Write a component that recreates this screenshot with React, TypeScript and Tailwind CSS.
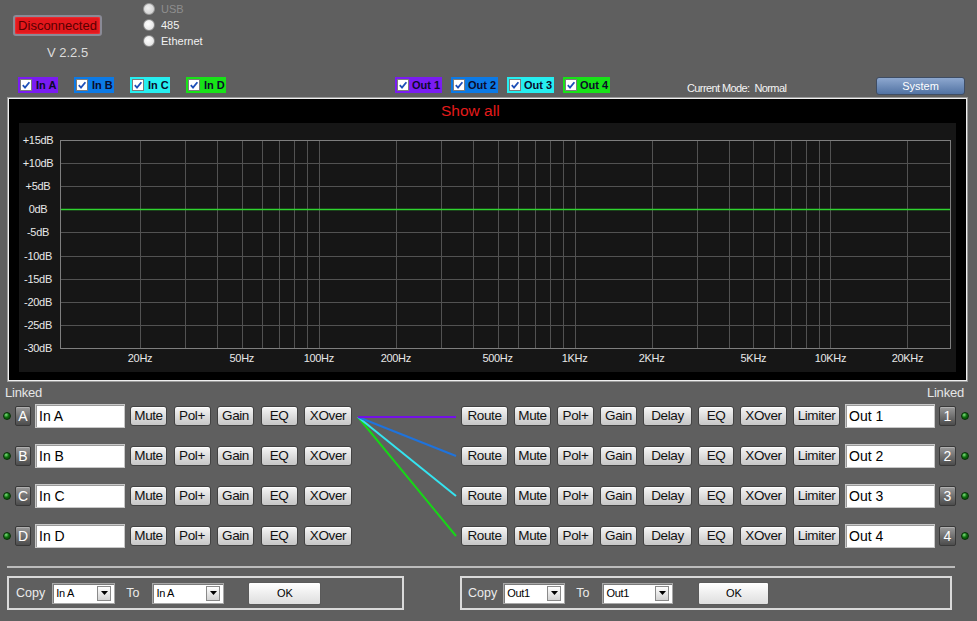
import React from "react";

const FONT = "font-['Liberation_Sans',Arial,sans-serif]";

function Check() {
  return (
    <div className="w-[12px] h-[12px] bg-white border border-[#7c7c7c] flex items-center justify-center shrink-0">
      <svg width="10" height="10" viewBox="0 0 10 10">
        <path d="M1.8 5.2 L4 7.6 L8.4 2.2" fill="none" stroke="#1d4fb8" strokeWidth="1.8" />
      </svg>
    </div>
  );
}

function Chip({ label, bg, w, gap }: { label: string; bg: string; w: string; gap: string }) {
  return (
    <div className={`${w} h-[16px] flex items-center pl-[2px] ${bg}`}>
      <Check />
      <span className={`${gap} text-[11px] font-bold leading-none text-[#0b0b2a]`}>{label}</span>
    </div>
  );
}

function Radio({ label, disabled }: { label: string; disabled?: boolean }) {
  return (
    <div className="h-[16px] flex items-center">
      <div
        className={`w-[12px] h-[12px] rounded-full border ${
          disabled
            ? "border-[#9a9a9a] bg-[radial-gradient(circle_at_40%_40%,#f0f0f0,#c8c8c8)]"
            : "border-[#8a8a8a] bg-[radial-gradient(circle_at_40%_40%,#ffffff,#dcdcdc)]"
        }`}
      />
      <span className={`ml-[6px] text-[11px] leading-none ${disabled ? "text-[#8e8e8e]" : "text-[#f2f2f2]"}`}>{label}</span>
    </div>
  );
}

function Btn({ label, w }: { label: string; w: string }) {
  return (
    <div
      className={`${w} h-[20px] shrink-0 rounded-[3px] border border-[#424242] bg-linear-to-b from-[#f6f6f6] to-[#c6c6c6] shadow-[inset_0_1px_0_#ffffff] flex items-center justify-center text-[13.5px] tracking-[-0.4px] text-[#111] leading-none`}
    >
      {label}
    </div>
  );
}

function DarkBtn({ label, w }: { label: string; w: string }) {
  return (
    <div
      className={`${w} h-[20px] shrink-0 rounded-[2px] border border-[#383838] bg-linear-to-b from-[#9a9a9a] to-[#4c4c4c] shadow-[inset_0_1px_0_#b0b0b0] flex items-center justify-center text-[14px] text-white leading-none`}
    >
      {label}
    </div>
  );
}

function Led({ extra = "" }: { extra?: string }) {
  return (
    <div className={`w-[8px] h-[8px] shrink-0 rounded-full border border-[#063006] bg-[radial-gradient(circle_at_35%_30%,#7ee07e_0%,#107010_45%,#054005_100%)] ${extra}`} />
  );
}

function NameBox({ label, extra = "" }: { label: string; extra?: string }) {
  return (
    <div
      className={`w-[90px] h-[24px] shrink-0 bg-white border border-[#c8c8c8] shadow-[inset_1px_1px_0_#9a9a9a] pl-[3px] pt-[2px] text-[14px] leading-[18px] text-black ${extra}`}
    >
      {label}
    </div>
  );
}

function Select({ value, w }: { value: string; w: string }) {
  return (
    <div className={`${w} h-[21px] shrink-0 bg-white border border-[#a8a8a8] shadow-[inset_1px_1px_0_#7a7a7a] flex items-center pl-[3px] pr-[3px]`}>
      <span className="text-[11px] tracking-[-0.3px] leading-none text-black">{value}</span>
      <div className="ml-auto w-[14px] h-[15px] border border-[#8a8a8a] bg-linear-to-b from-[#ffffff] to-[#d2d2d2] flex items-center justify-center">
        <svg width="7" height="4" viewBox="0 0 7 4">
          <path d="M0 0 L7 0 L3.5 4 Z" fill="#000" />
        </svg>
      </div>
    </div>
  );
}

function OkBtn({ w }: { w: string }) {
  return (
    <div className={`${w} h-[23px] shrink-0 rounded-[2px] border border-[#5a5a5a] bg-linear-to-b from-[#ffffff] to-[#dedede] flex items-center justify-center text-[11px] leading-none text-black`}>
      OK
    </div>
  );
}

const fx = (f: number) => 121 + 255.8 * Math.log10(f / 20);
const gridFreqs = [
  20, 30, 40, 50, 60, 70, 80, 90, 100, 200, 300, 400, 500, 600, 700, 800, 900, 1000, 2000, 3000, 4000, 5000, 6000,
  7000, 8000, 9000, 10000, 20000,
];
const xLabels: [number, string][] = [
  [20, "20Hz"],
  [50, "50Hz"],
  [100, "100Hz"],
  [200, "200Hz"],
  [500, "500Hz"],
  [1000, "1KHz"],
  [2000, "2KHz"],
  [5000, "5KHz"],
  [10000, "10KHz"],
  [20000, "20KHz"],
];
const yLabels = ["+15dB", "+10dB", "+5dB", "0dB", "-5dB", "-10dB", "-15dB", "-20dB", "-25dB", "-30dB"];
const gy = (i: number) => 17 + i * 23.11;

function Chart() {
  return (
    <svg width="937" height="249" viewBox="0 0 937 249" className="block">
      <g shapeRendering="crispEdges">
        {gridFreqs.map((f) => (
          <line key={f} x1={Math.round(fx(f)) + 0.5} y1={17} x2={Math.round(fx(f)) + 0.5} y2={225} stroke="#525252" strokeWidth="1" />
        ))}
        {yLabels.map((_, i) =>
          i > 0 && i < 9 && i !== 3 ? (
            <line key={i} x1={41} y1={Math.round(gy(i)) + 0.5} x2={931} y2={Math.round(gy(i)) + 0.5} stroke="#525252" strokeWidth="1" />
          ) : null
        )}
        <rect x="41.5" y="17.5" width="890" height="208" fill="none" stroke="#7e7e7e" strokeWidth="1" />
      </g>
      <line x1={42} y1={Math.round(gy(3)) + 0.5} x2={931} y2={Math.round(gy(3)) + 0.5} stroke="#2fd42f" strokeWidth="1.4" />
      <g fontFamily="'Liberation Sans', Arial, sans-serif" fontSize="11" fill="#e8e8e8" letterSpacing="-0.3">
        {yLabels.map((l, i) => (
          <text key={l} x={19} y={gy(i)} textAnchor="middle" dominantBaseline="central">
            {l}
          </text>
        ))}
        {xLabels.map(([f, l]) => (
          <text key={l} x={fx(f)} y={235} textAnchor="middle" dominantBaseline="central">
            {l}
          </text>
        ))}
      </g>
    </svg>
  );
}

const inRows = ["A", "B", "C", "D"];

export default function App() {
  return (
    <div className={`w-[977px] h-[621px] bg-[#5f5f5f] overflow-hidden ${FONT}`}>
      {/* header */}
      <div className="flex h-[77px]">
        <div className="w-[143px] pl-[13px] pt-[15px]">
          <div className="w-[89px] h-[21px] rounded-[3px] border-2 border-[#8a8a96] bg-[#e3171c] shadow-[inset_0_0_2px_#ff6060] flex items-center justify-center text-[13px] leading-none text-[#5a0000]">
            Disconnected
          </div>
          <div className="mt-[9px] pl-[34px] text-[13px] leading-[16px] text-[#dcdcdc]">V 2.2.5</div>
        </div>
        <div className="pt-[1px] flex flex-col">
          <Radio label="USB" disabled />
          <Radio label="485" />
          <Radio label="Ethernet" />
        </div>
      </div>

      {/* channel selection row */}
      <div className="flex h-[20px] items-start">
        <div className="flex gap-[16px] pl-[18px]">
          <Chip label="In A" bg="bg-[#7a1cf2]" w="w-[40px]" gap="ml-[4px]" />
          <Chip label="In B" bg="bg-[#0c7ae6]" w="w-[40px]" gap="ml-[4px]" />
          <Chip label="In C" bg="bg-[#26eef0]" w="w-[40px]" gap="ml-[4px]" />
          <Chip label="In D" bg="bg-[#18e218]" w="w-[40px]" gap="ml-[4px]" />
        </div>
        <div className="flex gap-[9px] ml-[169px]">
          <Chip label="Out 1" bg="bg-[#7a1cf2]" w="w-[47px]" gap="ml-[3px]" />
          <Chip label="Out 2" bg="bg-[#0c7ae6]" w="w-[47px]" gap="ml-[3px]" />
          <Chip label="Out 3" bg="bg-[#26eef0]" w="w-[47px]" gap="ml-[3px]" />
          <Chip label="Out 4" bg="bg-[#18e218]" w="w-[47px]" gap="ml-[3px]" />
        </div>
        <div className="ml-[77px] mt-[4px] text-[11px] leading-[14px] tracking-[-0.6px] text-[#f4f4f4] whitespace-pre">
          Current Mode:  Normal
        </div>
        <div className="ml-auto mr-[12px] w-[89px] h-[18px] rounded-[3px] border border-[#3f4d63] bg-linear-to-b from-[#8ea8cf] to-[#5273a3] flex items-center justify-center text-[11px] leading-none text-white">
          System
        </div>
      </div>

      {/* graph frame */}
      <div className="ml-[7px] w-[961px] h-[285px] border border-[#9c9c9c]">
        <div className="h-full border border-[#efefef] bg-black flex flex-col">
          <div className="h-[24px] pl-[432px] flex items-center text-[15.5px] leading-none text-[#e41b1b]">Show all</div>
          <div className="mx-[10px] h-[249px] bg-[#161616]">
            <Chart />
          </div>
        </div>
      </div>

      {/* linked labels */}
      <div className="h-[22px] flex items-center justify-between pl-[5px] pr-[13px] text-[13px] leading-[14px] tracking-[-0.2px] text-[#e6e6e6]">
        <span>Linked</span>
        <span>Linked</span>
      </div>

      {/* channel rows */}
      <div className="flex h-[144px]">
        <div className="w-[352px] pl-[3px] flex flex-col gap-[16px]">
          {inRows.map((r) => (
            <div key={r} className="h-[24px] flex items-center">
              <Led />
              <div className="ml-[4px]">
                <DarkBtn label={r} w="w-[16px]" />
              </div>
              <NameBox label={`In ${r}`} extra="ml-[4px]" />
              <div className="ml-[5px] flex gap-[6.5px]">
                <Btn label="Mute" w="w-[37px]" />
                <Btn label="Pol+" w="w-[37px]" />
                <Btn label="Gain" w="w-[37px]" />
                <Btn label="EQ" w="w-[37px]" />
                <Btn label="XOver" w="w-[48px]" />
              </div>
            </div>
          ))}
        </div>
        <svg width="109" height="144" viewBox="0 0 109 144" className="block shrink-0">
          <line x1="6" y1="13" x2="104" y2="132" stroke="#17d617" strokeWidth="2" />
          <line x1="6" y1="13" x2="104" y2="92" stroke="#34e4f0" strokeWidth="2" />
          <line x1="6" y1="13" x2="104" y2="52" stroke="#1f73dc" strokeWidth="2" />
          <line x1="6" y1="13" x2="104" y2="13" stroke="#7412e6" strokeWidth="2" />
        </svg>
        <div className="flex flex-col gap-[16px]">
          {[1, 2, 3, 4].map((n) => (
            <div key={n} className="h-[24px] flex items-center gap-[6px]">
              <Btn label="Route" w="w-[47px]" />
              <Btn label="Mute" w="w-[37px]" />
              <Btn label="Pol+" w="w-[37px]" />
              <Btn label="Gain" w="w-[37px]" />
              <Btn label="Delay" w="w-[49px]" />
              <Btn label="EQ" w="w-[36px]" />
              <Btn label="XOver" w="w-[47px]" />
              <Btn label="Limiter" w="w-[47px]" />
              <NameBox label={`Out ${n}`} extra="ml-[-1px]" />
              <div className="ml-[-2px]">
                <DarkBtn label={String(n)} w="w-[17px]" />
              </div>
              <Led extra="ml-[-1px]" />
            </div>
          ))}
        </div>
      </div>

      {/* separator */}
      <div className="mt-[18px] ml-[7px] w-[948px] h-[2px] bg-[#bcbcbc]" />

      {/* copy boxes */}
      <div className="mt-[8px] flex">
        <div className="ml-[7px] w-[397px] h-[34px] border-2 border-[#dadada] flex items-center pl-[7px]">
          <span className="text-[12.5px] leading-none text-[#ececec]">Copy</span>
          <div className="ml-[7px]">
            <Select value="In A" w="w-[63px]" />
          </div>
          <span className="ml-[11px] text-[12.5px] leading-none text-[#ececec]">To</span>
          <div className="ml-[13px]">
            <Select value="In A" w="w-[72px]" />
          </div>
          <div className="ml-[24px]">
            <OkBtn w="w-[73px]" />
          </div>
        </div>
        <div className="ml-[56px] w-[492px] h-[34px] border-2 border-[#dadada] flex items-center pl-[6px]">
          <span className="text-[12.5px] leading-none text-[#ececec]">Copy</span>
          <div className="ml-[6px]">
            <Select value="Out1" w="w-[62px]" />
          </div>
          <span className="ml-[11px] text-[12.5px] leading-none text-[#ececec]">To</span>
          <div className="ml-[13px]">
            <Select value="Out1" w="w-[71px]" />
          </div>
          <div className="ml-[25px]">
            <OkBtn w="w-[71px]" />
          </div>
        </div>
      </div>
    </div>
  );
}
